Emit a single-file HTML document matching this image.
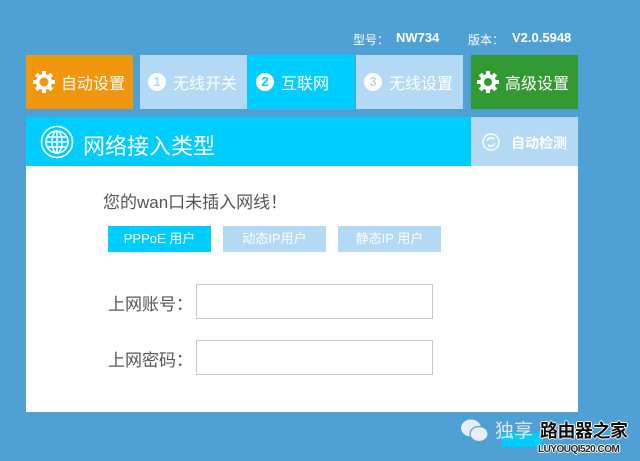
<!DOCTYPE html>
<html><head><meta charset="utf-8"><style>
*{margin:0;padding:0;box-sizing:border-box}
body{width:640px;height:461px;background:#4fa0d4;position:relative;overflow:hidden;font-family:"Liberation Sans","Noto Sans CJK SC",sans-serif;color:#fff}
.a{position:absolute}
.tab{position:absolute;top:55px;height:54px;display:flex;align-items:center;font-size:16px;color:#fff}
.num{display:inline-block;width:18px;height:18px;border-radius:50%;background:#fff;font-size:13px;font-weight:bold;text-align:center;line-height:18px;margin-right:7px}
.btn{position:absolute;top:226px;height:26px;font-size:13px;text-align:center;line-height:26px;color:#fff;width:103px}
.lbl{position:absolute;left:108px;font-size:17px;color:#555}
.inp{position:absolute;left:196px;width:237px;height:35px;border:1px solid #c8c8c8;background:#fff}
.wm{text-shadow:1px 0 #fff,-1px 0 #fff,0 1px #fff,0 -1px #fff}
</style></head><body>
<div class="a" style="left:353px;top:31px;font-size:12px">型号：</div>
<div class="a" style="left:396px;top:30px;font-size:13px;font-weight:bold">NW734</div>
<div class="a" style="left:468px;top:31px;font-size:12px">版本：</div>
<div class="a" style="left:512px;top:30px;font-size:13px;font-weight:bold">V2.0.5948</div>

<div class="tab" style="left:26px;width:107px;background:#f0960f;padding-left:6px">
<svg width="24" height="24" viewBox="0 0 24 24" style="margin-right:5px"><g fill="#fff"><circle cx="12" cy="12" r="8"/><rect x="10" y="1" width="4" height="22"/><rect x="1" y="10" width="22" height="4"/><rect x="10" y="1" width="4" height="22" transform="rotate(45 12 12)"/><rect x="10" y="1" width="4" height="22" transform="rotate(-45 12 12)"/></g><circle cx="12" cy="12" r="4.5" fill="#f0960f"/></svg>自动设置</div>
<div class="tab" style="left:140px;width:107px;background:#b3d9f5;padding-left:8px"><span class="num" style="color:#b3d9f5">1</span>无线开关</div>
<div class="tab" style="left:247px;width:108px;background:#00cdff;padding-left:9px"><span class="num" style="color:#00cdff">2</span>互联网</div>
<div class="tab" style="left:356px;width:107px;background:#b3d9f5;padding-left:8px"><span class="num" style="color:#b3d9f5">3</span>无线设置</div>
<div class="tab" style="left:471px;width:107px;background:#339933;padding-left:5px">
<svg width="24" height="24" viewBox="0 0 24 24" style="margin-right:5px"><g fill="#fff"><circle cx="12" cy="12" r="8"/><rect x="10" y="1" width="4" height="22"/><rect x="1" y="10" width="22" height="4"/><rect x="10" y="1" width="4" height="22" transform="rotate(45 12 12)"/><rect x="10" y="1" width="4" height="22" transform="rotate(-45 12 12)"/></g><circle cx="12" cy="12" r="4" fill="#339933"/></svg>高级设置</div>

<div class="a" style="left:26px;top:117px;width:445px;height:49px;background:#00cdff"></div>
<svg class="a" style="left:40px;top:125px" width="34" height="34" viewBox="0 0 34 34" fill="none" stroke="#fff" stroke-width="1.6"><circle cx="17" cy="17" r="15.5"/><circle cx="17" cy="17" r="11"/><ellipse cx="17" cy="17" rx="5" ry="11"/><line x1="17" y1="6" x2="17" y2="28"/><line x1="6" y1="17" x2="28" y2="17"/><line x1="8" y1="12" x2="26" y2="12"/><line x1="8" y1="22" x2="26" y2="22"/></svg>
<div class="a" style="left:83px;top:129px;font-size:22px">网络接入类型</div>
<div class="a" style="left:471px;top:117px;width:107px;height:49px;background:#b3d9f5"></div>
<svg class="a" style="left:482px;top:133px" width="18" height="18" viewBox="0 0 18 18" fill="none" stroke="#fff" stroke-width="1.5"><circle cx="9" cy="9" r="8"/><path d="M5.5 8a3.5 3.5 0 0 1 6.5-1.5M12.5 10a3.5 3.5 0 0 1-6.5 1.5"/></svg>
<div class="a" style="left:511px;top:133px;font-size:14px;font-weight:bold">自动检测</div>

<div class="a" style="left:26px;top:166px;width:552px;height:246px;background:#fff"></div>
<div class="a" style="left:103px;top:188px;font-size:17px;color:#555">您的wan口未插入网线！</div>
<div class="btn" style="left:108px;background:#00cdff">PPPoE 用户</div>
<div class="btn" style="left:223px;background:#b3d9f5">动态IP用户</div>
<div class="btn" style="left:338px;background:#b3d9f5">静态IP 用户</div>
<div class="lbl" style="top:290px">上网账号：</div>
<div class="inp" style="top:284px"></div>
<div class="lbl" style="top:346px">上网密码：</div>
<div class="inp" style="top:340px"></div>

<svg class="a" style="left:460px;top:418px" width="30" height="26" viewBox="0 0 30 26"><ellipse cx="11" cy="10" rx="10" ry="8.5" fill="#e8eef3"/><ellipse cx="19" cy="16" rx="9" ry="7.5" fill="#e8eef3" stroke="#4fa0d4" stroke-width="1.2"/></svg>
<div class="a" style="left:502px;top:433px;width:40px;height:14px;background:#00cdff"></div>
<div class="a" style="left:495px;top:416px;font-size:19px;color:#dfeaf3">独享</div>
<div class="a wm" style="left:540px;top:417px;font-size:18px;font-weight:bold;color:#111;letter-spacing:-0.5px">路由器之家</div>
<div class="a wm" style="left:538px;top:444px;font-size:10px;font-weight:bold;color:#222;letter-spacing:-.5px">LUYOUQI520.COM</div>
</body></html>
